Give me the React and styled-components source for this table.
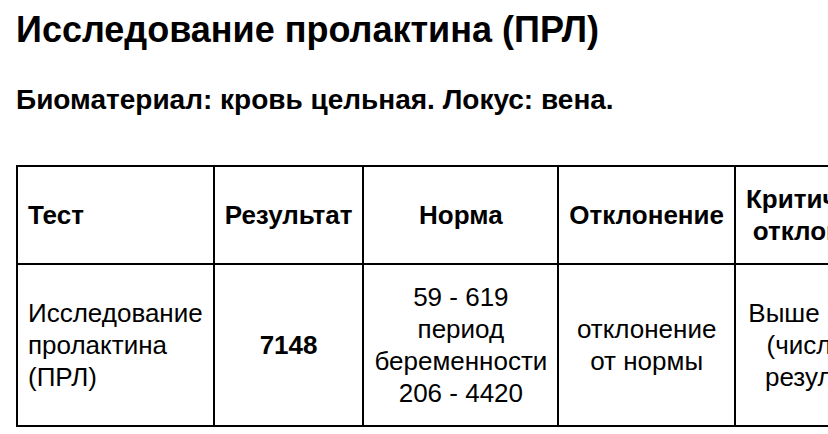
import React from "react";
import styled, { createGlobalStyle } from "styled-components";

const Global = createGlobalStyle`
  html, body { margin: 0; padding: 0; background: #fff; }
  body { font-family: "Liberation Sans", Arial, sans-serif; color: #000; }
`;

const Page = styled.div`
  padding: 9px 16px 0 16px;
  width: 828px;
  box-sizing: border-box;
  overflow: hidden;
  height: 434px;
`;

const Title = styled.h1`
  margin: 0;
  font-size: 36px;
  font-weight: bold;
  line-height: normal;
`;

const Subtitle = styled.h2`
  margin: 33px 0 0 0;
  font-size: 28px;
  font-weight: bold;
  line-height: normal;
`;

const TableWrap = styled.div`
  margin-top: 49px;
  width: 0;
`;

const Table = styled.table`
  border-collapse: collapse;
  border: 2px solid #000;
  font-size: 26px;
  line-height: 32px;
`;

const Th = styled.th`
  border: 2px solid #000;
  padding: 16px 10px;
  font-weight: bold;
  text-align: ${(p) => (p.$left ? "left" : "center")};
  vertical-align: middle;
`;

const Td = styled.td`
  border: 2px solid #000;
  padding: 16px 10px;
  font-weight: ${(p) => (p.$bold ? "bold" : "normal")};
  text-align: ${(p) => (p.$left ? "left" : "center")};
  vertical-align: middle;
`;

export default function App() {
  return (
    <>
      <Global />
      <Page>
        <Title>Исследование пролактина (ПРЛ)</Title>
        <Subtitle>Биоматериал: кровь цельная. Локус: вена.</Subtitle>
        <TableWrap>
          <Table>
            <thead>
              <tr>
                <Th $left>Тест</Th>
                <Th>Результат</Th>
                <Th>Норма</Th>
                <Th>Отклонение</Th>
                <Th>Критическое отклонение</Th>
              </tr>
            </thead>
            <tbody>
              <tr>
                <Td $left>Исследование пролактина (ПРЛ)</Td>
                <Td $bold>7148</Td>
                <Td>59 - 619 период беременности 206 - 4420</Td>
                <Td>отклонение от нормы</Td>
                <Td>Выше нормы (числовой результат)</Td>
              </tr>
            </tbody>
          </Table>
        </TableWrap>
      </Page>
    </>
  );
}
